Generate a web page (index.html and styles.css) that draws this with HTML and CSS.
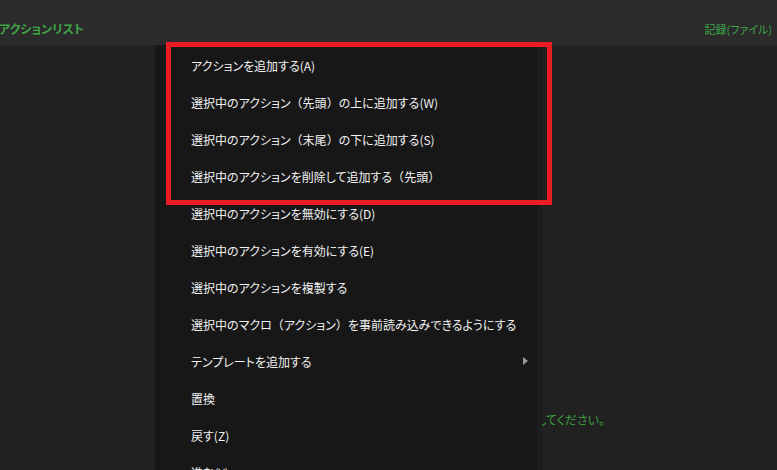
FILE: index.html
```html
<!DOCTYPE html>
<html lang="ja">
<head>
<meta charset="utf-8">
<link rel="stylesheet" href="styles.css">
</head>
<body>
<div class="app">
  <header class="header">
    <div class="title">アクションリスト</div>
    <div class="record">記録(ファイル)</div>
  </header>
  <main class="content">
    <p class="hint">右クリックメニューからアクションを追加してください。</p>
  </main>
  <div class="menu">
    <div class="item">アクションを追加する(A)</div>
    <div class="item">選択中のアクション<span class="fw">（</span>先頭<span class="fw">）</span>の上に追加する(W)</div>
    <div class="item">選択中のアクション<span class="fw">（</span>末尾<span class="fw">）</span>の下に追加する(S)</div>
    <div class="item">選択中のアクションを削除して追加する<span class="fw">（</span>先頭<span class="fw">）</span></div>
    <div class="item">選択中のアクションを無効にする(D)</div>
    <div class="item">選択中のアクションを有効にする(E)</div>
    <div class="item">選択中のアクションを複製する</div>
    <div class="item">選択中のマクロ<span class="fw">（</span>アクション<span class="fw">）</span>を事前読み込みできるようにする</div>
    <div class="item sub">テンプレートを追加する<span class="arrow"></span></div>
    <div class="item">置換</div>
    <div class="item">戻す(Z)</div>
    <div class="item">進む(Y)</div>
  </div>
  <div class="highlight"></div>
</div>
</body>
</html>
```
FILE: styles.css
```css
* { box-sizing: border-box; }
html, body {
  margin: 0;
  padding: 0;
  width: 777px;
  height: 470px;
  overflow: hidden;
  background: #212121;
  font-family: "Noto Sans CJK JP", "Noto Sans", sans-serif;
  font-feature-settings: "palt";
}
.app {
  position: relative;
  width: 777px;
  height: 470px;
}
.header {
  height: 45px;
  background: #2b2b2b;
  display: flex;
  align-items: center;
  justify-content: space-between;
  padding: 0 5px 0 0;
  color: #3fa548;
}
.title {
  font-size: 12px;
  font-weight: bold;
  margin-left: -1px;
  padding-top: 12px;
}
.record {
  font-size: 11px;
  padding-top: 12px;
}
.content {
  height: 425px;
  position: relative;
}
.hint {
  margin: 0;
  position: absolute;
  right: 172px;
  top: 366px;
  font-size: 12px;
  color: #3a9e3f;
}
.menu {
  position: absolute;
  left: 155px;
  top: 45px;
  width: 387px;
  height: 440px;
  background: #171717;
  border-right: 5px solid #1d1d1d;
  padding-top: 2px;
}
.item {
  height: 37px;
  display: flex;
  align-items: center;
  padding-left: 36px;
  font-size: 12px;
  color: #f2f2f2;
  position: relative;
}
.fw {
  font-feature-settings: normal;
}
.arrow {
  position: absolute;
  left: 368px;
  top: 14px;
  width: 0;
  height: 0;
  border-top: 4px solid transparent;
  border-bottom: 4px solid transparent;
  border-left: 5px solid #9a9a9a;
}
.highlight {
  position: absolute;
  left: 166px;
  top: 42px;
  width: 386px;
  height: 163px;
  border: 5px solid #ec1c24;
}
```
